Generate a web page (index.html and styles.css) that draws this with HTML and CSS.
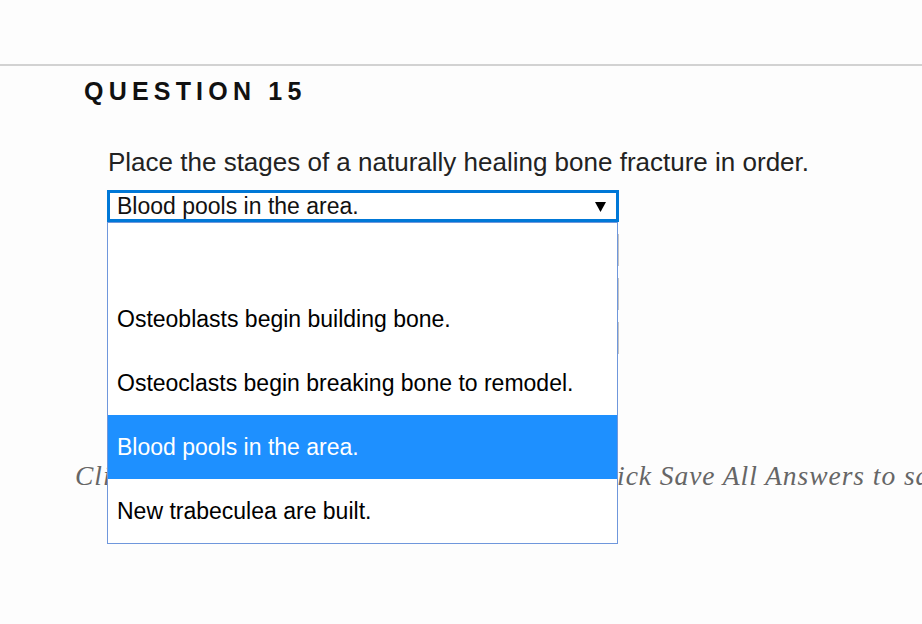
FILE: index.html
```html
<!DOCTYPE html>
<html lang="en">
<head>
<meta charset="utf-8">
<title>Question 15</title>
<link rel="stylesheet" href="styles.css">
</head>
<body>
<header class="topbar"></header>
<main class="question">
  <h2 class="q-title">QUESTION 15</h2>
  <div class="q-body">
    <p class="prompt">Place the stages of a naturally healing bone fracture in order.</p>
    <div class="select-group">
      <div class="select select-focused">
        <span class="select-value">Blood pools in the area.</span>
        <svg class="arrow" width="11" height="10" viewBox="0 0 11 10"><polygon points="0,0 11,0 5.5,10" fill="#000"/></svg>
      </div>
      <div class="select select-ghost"></div>
      <div class="select select-ghost"></div>
      <div class="select select-ghost"></div>
      <ul class="listbox">
        <li class="option"></li>
        <li class="option">Osteoblasts begin building bone.</li>
        <li class="option">Osteoclasts begin breaking bone to remodel.</li>
        <li class="option option-selected">Blood pools in the area.</li>
        <li class="option">New trabeculea are built.</li>
      </ul>
    </div>
  </div>
</main>
<footer class="save-bar">
  <p class="save-note">Click Save and Submit to save and submit. Click Save All Answers to save all answers.</p>
</footer>
</body>
</html>
```

FILE: styles.css
```css
html, body {
  margin: 0;
  padding: 0;
}
body {
  background: #fdfdfd;
  font-family: "Liberation Sans", Arial, sans-serif;
  overflow: hidden;
  width: 922px;
  height: 624px;
}
.topbar {
  height: 64px;
  border-bottom: 2px solid #d2d2d2;
}
.question {
  padding-left: 84px;
}
.q-title {
  margin: 10px 0 0 0;
  font-size: 25px;
  line-height: 30px;
  font-weight: bold;
  letter-spacing: 5.2px;
  color: #111;
}
.q-body {
  padding-left: 23px;
}
.prompt {
  margin: 41px 0 0 1px;
  font-size: 26px;
  line-height: 30px;
  color: #222;
}
.select-group {
  position: relative;
  margin-top: 13px;
  width: 512px;
}
.select {
  box-sizing: border-box;
  width: 512px;
  height: 32px;
}
.select-focused {
  border: 3px solid #0078d7;
  background: #fff;
  display: flex;
  align-items: center;
  justify-content: space-between;
  padding: 0 10px 0 7px;
}
.select-value {
  font-size: 23px;
  line-height: 26px;
  color: #111;
}
.arrow {
  display: block;
  margin-top: 2px;
}
.select-ghost {
  margin-top: 12px;
  border: 1px solid #c4c4c4;
  background: #fff;
}
.listbox {
  position: absolute;
  top: 32px;
  left: 0;
  width: 511px;
  box-sizing: border-box;
  margin: 0;
  padding: 0;
  list-style: none;
  border: 1px solid #6f97dc;
  background: #fff;
}
.option {
  height: 64px;
  line-height: 64px;
  padding-left: 9px;
  font-size: 23px;
  color: #000;
  white-space: nowrap;
}
.option-selected {
  background: #1e90ff;
  color: #fff;
}
.save-bar {
  margin-top: 106px;
  padding-left: 75px;
  overflow: hidden;
}
.save-note {
  margin: 0;
  font-family: "Liberation Serif", Georgia, serif;
  font-style: italic;
  font-size: 27.5px;
  line-height: 32px;
  letter-spacing: 0.95px;
  color: #666;
  white-space: nowrap;
}
```
